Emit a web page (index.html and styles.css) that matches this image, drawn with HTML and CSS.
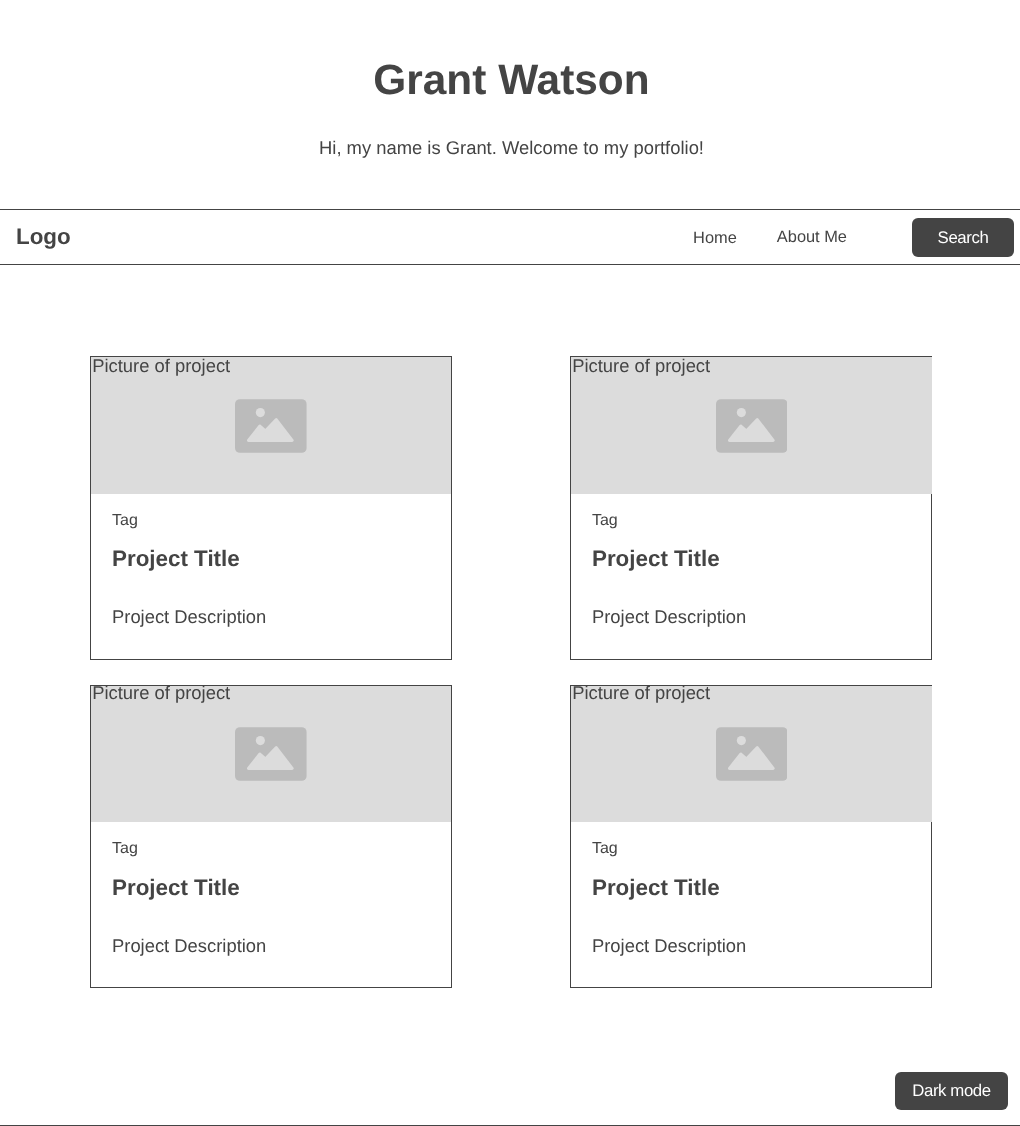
FILE: index.html
```html
<!DOCTYPE html>
<html lang="en">
<head>
<meta charset="utf-8">
<title>Grant Watson</title>
<link rel="stylesheet" href="styles.css">
</head>
<body>
<div class="page">
  <header class="hero">
    <h1 class="hero-title">Grant Watson</h1>
    <p class="hero-text">Hi, my name is Grant. Welcome to my portfolio!</p>
  </header>
  <nav class="nav">
    <a class="logo">Logo</a>
    <a class="nav-link nav-home">Home</a>
    <a class="nav-link nav-about">About Me</a>
    <button class="btn btn-search">Search</button>
  </nav>
  <main class="grid">
    <article class="card">
      <div class="pic"><span class="pic-alt">Picture of project</span>
        <svg class="pic-icon" viewBox="0 0 72 54"><rect width="72" height="54" rx="5" fill="#bbbbbb"/><circle cx="25.5" cy="13.5" r="4.6" fill="#dcdcdc"/><path d="M13.5 41.5 25 27 30.5 32 41.5 20.5 57.5 41.5Z" fill="#dcdcdc" stroke="#dcdcdc" stroke-width="3" stroke-linejoin="round"/></svg>
      </div>
      <div class="card-body"><div class="tag">Tag</div><h2 class="card-title">Project Title</h2><p class="card-desc">Project Description</p></div>
    </article>
    <article class="card">
      <div class="pic"><span class="pic-alt">Picture of project</span>
        <svg class="pic-icon" viewBox="0 0 72 54"><rect width="72" height="54" rx="5" fill="#bbbbbb"/><circle cx="25.5" cy="13.5" r="4.6" fill="#dcdcdc"/><path d="M13.5 41.5 25 27 30.5 32 41.5 20.5 57.5 41.5Z" fill="#dcdcdc" stroke="#dcdcdc" stroke-width="3" stroke-linejoin="round"/></svg>
      </div>
      <div class="card-body"><div class="tag">Tag</div><h2 class="card-title">Project Title</h2><p class="card-desc">Project Description</p></div>
    </article>
    <article class="card">
      <div class="pic"><span class="pic-alt">Picture of project</span>
        <svg class="pic-icon" viewBox="0 0 72 54"><rect width="72" height="54" rx="5" fill="#bbbbbb"/><circle cx="25.5" cy="13.5" r="4.6" fill="#dcdcdc"/><path d="M13.5 41.5 25 27 30.5 32 41.5 20.5 57.5 41.5Z" fill="#dcdcdc" stroke="#dcdcdc" stroke-width="3" stroke-linejoin="round"/></svg>
      </div>
      <div class="card-body"><div class="tag">Tag</div><h2 class="card-title">Project Title</h2><p class="card-desc">Project Description</p></div>
    </article>
    <article class="card">
      <div class="pic"><span class="pic-alt">Picture of project</span>
        <svg class="pic-icon" viewBox="0 0 72 54"><rect width="72" height="54" rx="5" fill="#bbbbbb"/><circle cx="25.5" cy="13.5" r="4.6" fill="#dcdcdc"/><path d="M13.5 41.5 25 27 30.5 32 41.5 20.5 57.5 41.5Z" fill="#dcdcdc" stroke="#dcdcdc" stroke-width="3" stroke-linejoin="round"/></svg>
      </div>
      <div class="card-body"><div class="tag">Tag</div><h2 class="card-title">Project Title</h2><p class="card-desc">Project Description</p></div>
    </article>
  </main>
  <footer class="footer"><button class="btn btn-dark">Dark mode</button></footer>
</div>
</body>
</html>
```
FILE: styles.css
```css
* { box-sizing: border-box; }
html, body { margin: 0; padding: 0; }
body { font-family: "Liberation Sans", Arial, sans-serif; color: #444444; background: #ffffff; text-rendering: geometricPrecision; }
.page { height: 1126px; display: flex; flex-direction: column; border-bottom: 1px solid #444444; will-change: transform; }
.hero { height: 209px; padding: 56px 0 0 3px; text-align: center; }
.hero-title { margin: 0; font-size: 42.4px; line-height: 48px; font-weight: 700; }
.hero-text { margin: 32px 0 0; font-size: 18.4px; line-height: 24px; }
.nav { height: 56px; border-top: 1px solid #444444; border-bottom: 1px solid #444444; display: flex; align-items: center; padding: 0 6px 0 16px; }
.logo { font-size: 22.4px; font-weight: 700; margin-right: auto; }
.nav-link { font-size: 16.4px; }
.nav-home { margin: 3px 40px 0 0; }
.nav-about { margin: 1px 65px 0 0; }
.btn { border: 0; border-radius: 6px; background: #444444; color: #ffffff; font-family: inherit; font-size: 16.8px; letter-spacing: -0.4px; font-weight: 400; padding: 2px 0 0; line-height: 20px; text-rendering: geometricPrecision; }
.btn-search { width: 102px; height: 39px; }
.grid { display: grid; grid-template-columns: 361.4px 361.6px; column-gap: 118.6px; row-gap: 25px; padding: 91.4px 0 0 90.4px; }
.card { border: 1px solid #444444; height: 303.2px; display: flex; flex-direction: column; }
.pic { height: 136.5px; background: #dcdcdc; display: grid; font-size: 18.4px; line-height: 20px; }
.card:nth-child(even) .pic { margin-right: -1px; }
.pic-alt, .pic-icon { grid-area: 1 / 1; }
.pic-alt { margin: -1.4px 0 0 0.8px; }
.card:nth-child(n+3) .pic-alt { margin-top: -2.4px; }
.pic-icon { width: 71.6px; height: 54px; place-self: center; }
.card-body { padding: 16.8px 20.6px 0; }
.tag { font-size: 16px; line-height: 20px; }
.card-title { margin: 15.7px 0 0; font-size: 22.4px; line-height: 26px; font-weight: 700; }
.card-desc { margin: 33px 0 0; font-size: 18.4px; line-height: 24px; }
.footer { margin-top: auto; display: flex; justify-content: flex-end; padding: 0 12px 15px 0; }
.btn-dark { width: 113px; height: 38px; padding-top: 0; }
```
